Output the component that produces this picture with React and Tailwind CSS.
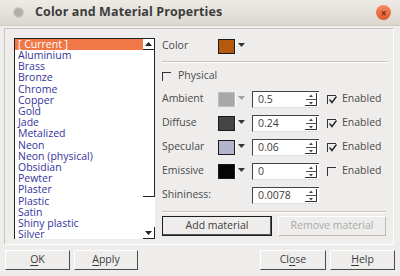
import React from "react";

const materials = [
  "Aluminium", "Brass", "Bronze", "Chrome", "Copper", "Gold", "Jade", "Metalized",
  "Neon", "Neon (physical)", "Obsidian", "Pewter", "Plaster", "Plastic", "Satin",
  "Shiny plastic", "Silver",
];

const rows = [
  { label: "Ambient", color: "bg-[#a8a8a8]", value: "0.5", enabled: true, dim: true },
  { label: "Diffuse", color: "bg-[#444444]", value: "0.24", enabled: true },
  { label: "Specular", color: "bg-[#b4b4cc]", value: "0.06", enabled: true },
  { label: "Emissive", color: "bg-[#050505]", value: "0", enabled: false },
];

function Check({ checked }) {
  return (
    <span className="relative w-[9px] h-[9px] border-t border-l border-[#333] shrink-0">
      {checked && (
        <svg className="absolute left-[1px] top-[0px]" width="8" height="8" viewBox="0 0 8 8">
          <path d="M0.5 3.5 L3 6.5 L7.5 0.5" fill="none" stroke="#222" strokeWidth="1.4" />
        </svg>
      )}
    </span>
  );
}

function Swatch({ color, dim }) {
  return (
    <div className="flex h-[15px] w-[28px]">
      <div className={`w-[17px] h-[15px] border ${dim ? "border-[#bdbdbd]" : "border-[#1a1a1a]"} ${color}`} />
      <div className="w-[11px] h-[15px] border-l border-white flex items-start justify-center pt-[4px]">
        <svg width="7" height="4" viewBox="0 0 7 4">
          <path d="M0 0 H7 L3.5 4 Z" fill={dim ? "#a0a0a0" : "#333"} />
        </svg>
      </div>
    </div>
  );
}

function Spin({ value }) {
  return (
    <div className="flex items-center w-[67px] h-[17px] bg-white border-t border-l border-[#444] border-b border-b-[#e0e0e0] pl-[5px] pr-[2px]">
      <span className="flex-1 text-[#3c3c3c] leading-none">{value}</span>
      <svg width="12" height="13" viewBox="0 0 12 13">
        <path d="M4 4 L6 1.5 L8 4 Z" fill="#444" />
        <path d="M1 6.5 H11" stroke="#555" strokeWidth="1" />
        <path d="M4 9 L6 11.5 L8 9 Z" fill="#444" />
        <path d="M11.5 0 V13 M0 12.5 H12" stroke="#333" strokeWidth="1" />
      </svg>
    </div>
  );
}

function Btn({ children, className = "" }) {
  return (
    <div className={`h-[20px] flex items-center justify-center bg-[#eeedeb] border-t border-l border-white border-b border-r border-b-[#4a4a4a] border-r-[#4a4a4a] text-[#3c3c3c] ${className}`}>
      {children}
    </div>
  );
}

export default function App() {
  return (
    <div className="w-[400px] h-[276px] bg-[#efedeb] font-['Open_Sans',sans-serif] text-[10.5px] overflow-hidden">
      {/* title bar */}
      <div className="h-[26px] bg-gradient-to-b from-[#eeebe6] to-[#dbd7cf] flex items-center px-[13px] border-b border-[#cfcbc3]">
        <span className="w-[11px] h-[11px] rounded-full bg-[#b3b0aa] border border-[#d2cfc9]" />
        <span className="ml-[11px] font-bold text-[12.5px] text-[#3c3c3c] tracking-[0.1px]">Color and Material Properties</span>
        <span className="ml-auto -mr-[4px] w-[15px] h-[15px] rounded-full bg-gradient-to-b from-[#f58a63] to-[#de5a2b] flex items-center justify-center text-[#7a2a10] text-[10px] leading-none font-bold">
          ×
        </span>
      </div>

      {/* main frame */}
      <div className="mt-[2px] ml-[4px] w-[390px] h-[217px] border border-[#c8c5bf] border-b-white border-r-white pl-[9px] pt-[9px] flex">
        {/* list */}
        <div className="w-[141px] h-[201px] bg-white border-t border-l border-[#222] flex overflow-hidden">
          <div className="flex-1 overflow-hidden">
            <div className="h-[11px] bg-[#f07746] text-white leading-[11px] pl-[3px]">[ Current ]</div>
            {materials.map((m) => (
              <div key={m} className="leading-[11.2px] text-[#34349c] pl-[3px] whitespace-nowrap">
                {m}
              </div>
            ))}
          </div>
          <div className="w-[12px] flex flex-col bg-white">
            <div className="h-[11px] border-r border-b border-[#222] flex items-center justify-center">
              <svg width="7" height="4" viewBox="0 0 7 4"><path d="M0 4 H7 L3.5 0 Z" fill="#222" /></svg>
            </div>
            <div className="h-[147px] border-r border-b border-[#222]" />
            <div className="flex-1" />
            <div className="h-[12px] border-r border-b border-[#222] flex items-center justify-center">
              <svg width="7" height="4" viewBox="0 0 7 4"><path d="M0 0 H7 L3.5 4 Z" fill="#222" /></svg>
            </div>
          </div>
        </div>

        {/* properties */}
        <div className="ml-[7px] w-[225px] flex flex-col text-[#4a4a4a]">
          <div className="h-[16px] flex items-center">
            <span className="w-[56px]">Color</span>
            <Swatch color="bg-[#b45a0e]" />
          </div>
          <div className="mt-[7px] h-[2px] border-t border-[#c6c3bd] border-b border-b-white" />
          <div className="mt-[6px] h-[14px] flex items-center gap-[7px]">
            <Check />
            <span>Physical</span>
          </div>
          <div className="mt-[7px] flex flex-col gap-[6px]">
            {rows.map((r) => (
              <div key={r.label} className="h-[18px] flex items-center">
                <span className="w-[56px]">{r.label}</span>
                <Swatch color={r.color} dim={r.dim} />
                <div className="ml-[6px]"><Spin value={r.value} /></div>
                <div className="ml-[8px] flex items-center gap-[6px]">
                  <Check checked={r.enabled} />
                  <span>Enabled</span>
                </div>
              </div>
            ))}
            <div className="h-[18px] flex items-center">
              <span className="w-[90px]">Shininess:</span>
              <Spin value="0.0078" />
            </div>
          </div>
          <div className="mt-[7px] w-[224px] h-[2px] border-t border-[#c6c3bd] border-b border-b-white" />
          <div className="mt-[3px] w-[224px] flex justify-between">
            <Btn className="w-[110px] !border-[#1e1e1e] shadow-[inset_-1px_-1px_0_#555]">Add material</Btn>
            <Btn className="w-[108px] text-[#a9a9a9] !border-b-[#bdbbb7] !border-r-[#bdbbb7]">Remove material</Btn>
          </div>
        </div>
      </div>

      {/* dialog buttons */}
      <div className="mt-[5px] px-[5px] flex">
        <Btn className="w-[65px]"><span className="underline underline-offset-2">O</span>K</Btn>
        <Btn className="ml-[4px] w-[64px]"><span className="underline underline-offset-2">A</span>pply</Btn>
        <Btn className="ml-auto w-[66px]">Cl<span className="underline underline-offset-2">o</span>se</Btn>
        <Btn className="ml-[4px] w-[65px]"><span className="underline underline-offset-2">H</span>elp</Btn>
      </div>
    </div>
  );
}
